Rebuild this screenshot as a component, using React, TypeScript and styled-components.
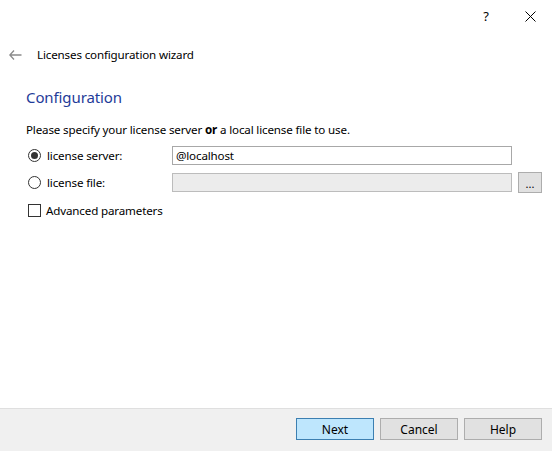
import React from "react";
import styled, { createGlobalStyle } from "styled-components";

const Global = createGlobalStyle`
  html, body { margin: 0; padding: 0; background: #fff; }
  body { font-family: "Noto Sans", "Open Sans", sans-serif; font-size: 11.6px; color: #000; }
  * { box-sizing: border-box; }
`;

const Window = styled.div`
  width: 552px;
  height: 451px;
  display: flex;
  flex-direction: column;
  background: #fff;
  overflow: hidden;
`;

const TitleBar = styled.div`
  height: 32px;
  display: flex;
  justify-content: flex-end;
  align-items: center;
`;

const CaptionButton = styled.div`
  width: 44px;
  height: 32px;
  display: flex;
  align-items: center;
  justify-content: center;
  font-size: 13px;
  color: #000;
`;

const Header = styled.div`
  height: 44px;
  display: flex;
  align-items: center;
  padding-left: 9px;
  padding-top: 1px;
  gap: 15px;
`;

const HeaderTitle = styled.div`
  letter-spacing: -0.15px;
`;

const Content = styled.div`
  flex: 1;
  padding: 11px 10px 0 26px;
  display: flex;
  flex-direction: column;
`;

const Heading = styled.div`
  font-size: 15px;
  color: #1f3c99;
  height: 21px;
  line-height: 21px;
  letter-spacing: -0.1px;
`;

const Intro = styled.div`
  margin-top: 14px;
  letter-spacing: -0.15px;
  height: 16px;
  line-height: 16px;
`;

const Row = styled.div<{ $top: number }>`
  display: flex;
  align-items: center;
  height: 20px;
  margin-top: ${(p) => p.$top}px;
`;

const RadioWrap = styled.div`
  width: 146px;
  display: flex;
  align-items: center;
  gap: 6px;
  padding-left: 2px;
  letter-spacing: -0.15px;
`;

const RadioCircle = styled.div<{ $checked?: boolean }>`
  width: 13px;
  height: 13px;
  border-radius: 50%;
  border: 1px solid #333;
  display: flex;
  align-items: center;
  justify-content: center;
  &::after {
    content: "";
    width: 7px;
    height: 7px;
    border-radius: 50%;
    background: ${(p) => (p.$checked ? "#333" : "transparent")};
  }
`;

const TextInput = styled.div<{ $disabled?: boolean }>`
  width: 340px;
  height: 19px;
  border: 1px solid ${(p) => (p.$disabled ? "#bcbcbc" : "#a8a8a8")};
  background: ${(p) => (p.$disabled ? "#ececec" : "#fff")};
  padding-left: 3px;
  line-height: 17px;
  letter-spacing: -0.15px;
`;

const BrowseButton = styled.div`
  width: 24px;
  height: 21px;
  margin-left: 6px;
  border: 1px solid #adadad;
  background: #e1e1e1;
  display: flex;
  align-items: flex-end;
  justify-content: center;
  padding-bottom: 3px;
  font-size: 11px;
  line-height: 11px;
`;

const CheckRow = styled.div`
  display: flex;
  align-items: center;
  gap: 5px;
  margin-top: 10px;
  padding-left: 2px;
  height: 16px;
  letter-spacing: -0.15px;
`;

const CheckBox = styled.div`
  width: 13px;
  height: 13px;
  border: 1px solid #333;
  background: #fff;
`;

const Footer = styled.div`
  height: 43px;
  background: #f0f0f0;
  border-top: 1px solid #dfdfdf;
  display: flex;
  justify-content: flex-end;
  align-items: flex-start;
  padding: 9px 10px 0 0;
  gap: 6px;
`;

const Button = styled.div<{ $primary?: boolean }>`
  width: 78px;
  height: 22px;
  border: 1px solid ${(p) => (p.$primary ? "#3c7fb1" : "#adadad")};
  background: ${(p) => (p.$primary ? "#bee6fd" : "#e1e1e1")};
  display: flex;
  align-items: center;
  justify-content: center;
  font-size: 12px;
`;

export default function App() {
  return (
    <>
      <Global />
      <Window>
        <TitleBar>
          <CaptionButton>?</CaptionButton>
          <CaptionButton>
            <svg width="11" height="11" viewBox="0 0 11 11">
              <path d="M0.5 0.5 L10.5 10.5 M10.5 0.5 L0.5 10.5" stroke="#000" strokeWidth="1" />
            </svg>
          </CaptionButton>
        </TitleBar>
        <Header>
          <svg width="13" height="10" viewBox="0 0 13 10">
            <path d="M5 0.5 L0.8 5 L5 9.5 M0.8 5 H12.5" stroke="#8a8a8a" strokeWidth="1.3" fill="none" />
          </svg>
          <HeaderTitle>Licenses configuration wizard</HeaderTitle>
        </Header>
        <Content>
          <Heading>Configuration</Heading>
          <Intro>
            Please specify your license server <b>or</b> a local license file to use.
          </Intro>
          <Row $top={7}>
            <RadioWrap>
              <RadioCircle $checked />
              <span>license server:</span>
            </RadioWrap>
            <TextInput>@localhost</TextInput>
          </Row>
          <Row $top={7}>
            <RadioWrap>
              <RadioCircle />
              <span>license file:</span>
            </RadioWrap>
            <TextInput $disabled />
            <BrowseButton>...</BrowseButton>
          </Row>
          <CheckRow>
            <CheckBox />
            <span>Advanced parameters</span>
          </CheckRow>
        </Content>
        <Footer>
          <Button $primary>Next</Button>
          <Button>Cancel</Button>
          <Button>Help</Button>
        </Footer>
      </Window>
    </>
  );
}
